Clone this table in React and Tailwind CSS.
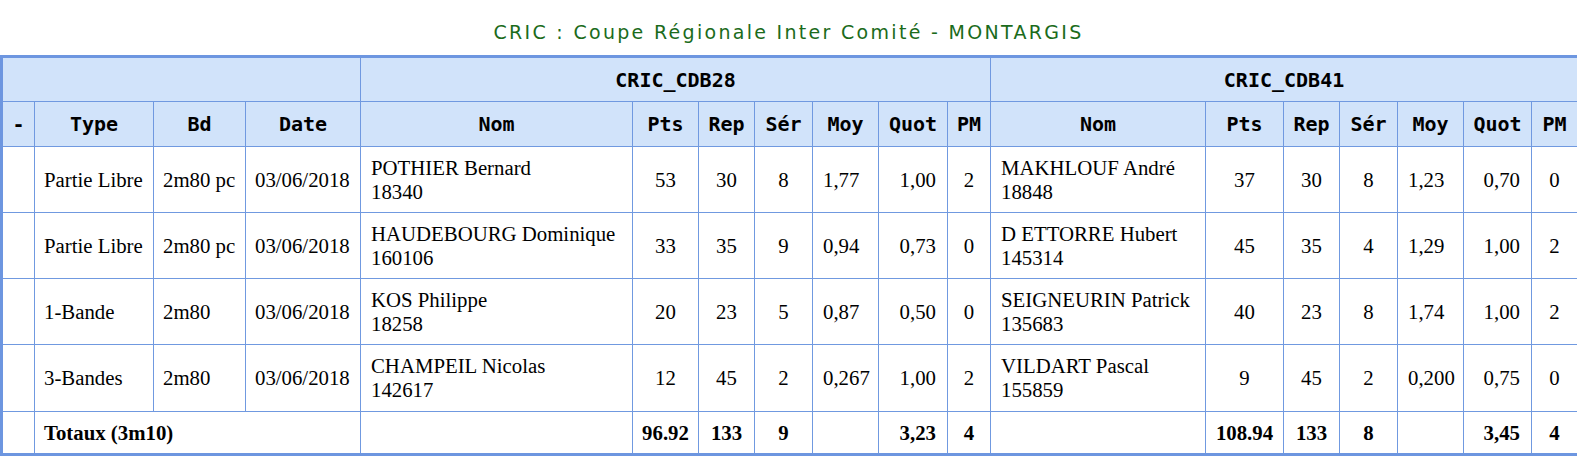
import React from "react";

const rows = [
  {
    type: "Partie Libre", bd: "2m80 pc", date: "03/06/2018",
    a: { nom: "POTHIER Bernard", lic: "18340", pts: "53", rep: "30", ser: "8", moy: "1,77", quot: "1,00", pm: "2" },
    b: { nom: "MAKHLOUF André", lic: "18848", pts: "37", rep: "30", ser: "8", moy: "1,23", quot: "0,70", pm: "0" },
  },
  {
    type: "Partie Libre", bd: "2m80 pc", date: "03/06/2018",
    a: { nom: "HAUDEBOURG Dominique", lic: "160106", pts: "33", rep: "35", ser: "9", moy: "0,94", quot: "0,73", pm: "0" },
    b: { nom: "D ETTORRE Hubert", lic: "145314", pts: "45", rep: "35", ser: "4", moy: "1,29", quot: "1,00", pm: "2" },
  },
  {
    type: "1-Bande", bd: "2m80", date: "03/06/2018",
    a: { nom: "KOS Philippe", lic: "18258", pts: "20", rep: "23", ser: "5", moy: "0,87", quot: "0,50", pm: "0" },
    b: { nom: "SEIGNEURIN Patrick", lic: "135683", pts: "40", rep: "23", ser: "8", moy: "1,74", quot: "1,00", pm: "2" },
  },
  {
    type: "3-Bandes", bd: "2m80", date: "03/06/2018",
    a: { nom: "CHAMPEIL Nicolas", lic: "142617", pts: "12", rep: "45", ser: "2", moy: "0,267", quot: "1,00", pm: "2" },
    b: { nom: "VILDART Pascal", lic: "155859", pts: "9", rep: "45", ser: "2", moy: "0,200", quot: "0,75", pm: "0" },
  },
];

const totals = {
  a: { pts: "96.92", rep: "133", ser: "9", quot: "3,23", pm: "4" },
  b: { pts: "108.94", rep: "133", ser: "8", quot: "3,45", pm: "4" },
};

const widths = [33, 119, 92, 115, 272, 66, 56, 58, 66, 69, 43, 215, 78, 56, 58, 66, 68, 47];

const th = "border border-[#7099e0] bg-[#d1e3fa] text-center align-middle font-bold";
const td = "border border-[#7099e0] align-middle";

// one team's cells for a match row
const TeamCells = ({ p }) => (
  <>
    <td className={`${td} pl-[10px] pr-2 leading-[24px]`}>
      {p.nom}
      <br />
      {p.lic}
    </td>
    <td className={`${td} text-center`}>{p.pts}</td>
    <td className={`${td} text-center`}>{p.rep}</td>
    <td className={`${td} text-center`}>{p.ser}</td>
    <td className={`${td} text-left pl-[10px]`}>{p.moy}</td>
    <td className={`${td} text-right pr-[11px]`}>{p.quot}</td>
    <td className={`${td} text-center`}>{p.pm}</td>
  </>
);

const TotalCells = ({ t }) => (
  <>
    <td className={td}></td>
    <td className={`${td} text-center font-bold`}>{t.pts}</td>
    <td className={`${td} text-center font-bold`}>{t.rep}</td>
    <td className={`${td} text-center font-bold`}>{t.ser}</td>
    <td className={td}></td>
    <td className={`${td} text-right pr-[11px] font-bold`}>{t.quot}</td>
    <td className={`${td} text-center font-bold`}>{t.pm}</td>
  </>
);

const teamHeads = ["Nom", "Pts", "Rep", "Sér", "Moy", "Quot", "PM"];

export default function App() {
  return (
    <div className="w-[1577px] h-[458px] bg-white overflow-hidden">
      <div className="h-[55px] pt-[10px] flex items-center justify-center text-[19px] tracking-[2.3px] text-[#1b6b1b] font-['DejaVu_Sans',sans-serif]">
        CRIC : Coupe Régionale Inter Comité - MONTARGIS
      </div>

      <table className="w-[1577px] table-fixed border-collapse border-[3px] border-[#6d96e0] text-[20.8px] text-black font-['Liberation_Serif',serif]">
        <colgroup>
          {widths.map((w, i) => (
            <col key={i} style={{ width: w }} />
          ))}
        </colgroup>
        <thead className="font-['DejaVu_Sans_Mono',monospace] text-[20px]">
          <tr className="h-[45px]">
            <th colSpan={4} className={th}></th>
            <th colSpan={7} className={th}>CRIC_CDB28</th>
            <th colSpan={7} className={th}>CRIC_CDB41</th>
          </tr>
          <tr className="h-[45px]">
            <th className={th}>-</th>
            <th className={th}>Type</th>
            <th className={th}>Bd</th>
            <th className={th}>Date</th>
            {teamHeads.map((h) => (
              <th key={"a" + h} className={th}>{h}</th>
            ))}
            {teamHeads.map((h) => (
              <th key={"b" + h} className={th}>{h}</th>
            ))}
          </tr>
        </thead>
        <tbody>
          {rows.map((r, i) => (
            <tr key={i} className={i === 3 ? "h-[67px]" : "h-[66px]"}>
              <td className={td}></td>
              <td className={`${td} pl-[9px]`}>{r.type}</td>
              <td className={`${td} pl-[9px]`}>{r.bd}</td>
              <td className={`${td} pl-[9px]`}>{r.date}</td>
              <TeamCells p={r.a} />
              <TeamCells p={r.b} />
            </tr>
          ))}
          <tr className="h-[43px]">
            <td className={td}></td>
            <td colSpan={3} className={`${td} pl-[9px] font-bold`}>Totaux (3m10)</td>
            <TotalCells t={totals.a} />
            <TotalCells t={totals.b} />
          </tr>
        </tbody>
      </table>
    </div>
  );
}
